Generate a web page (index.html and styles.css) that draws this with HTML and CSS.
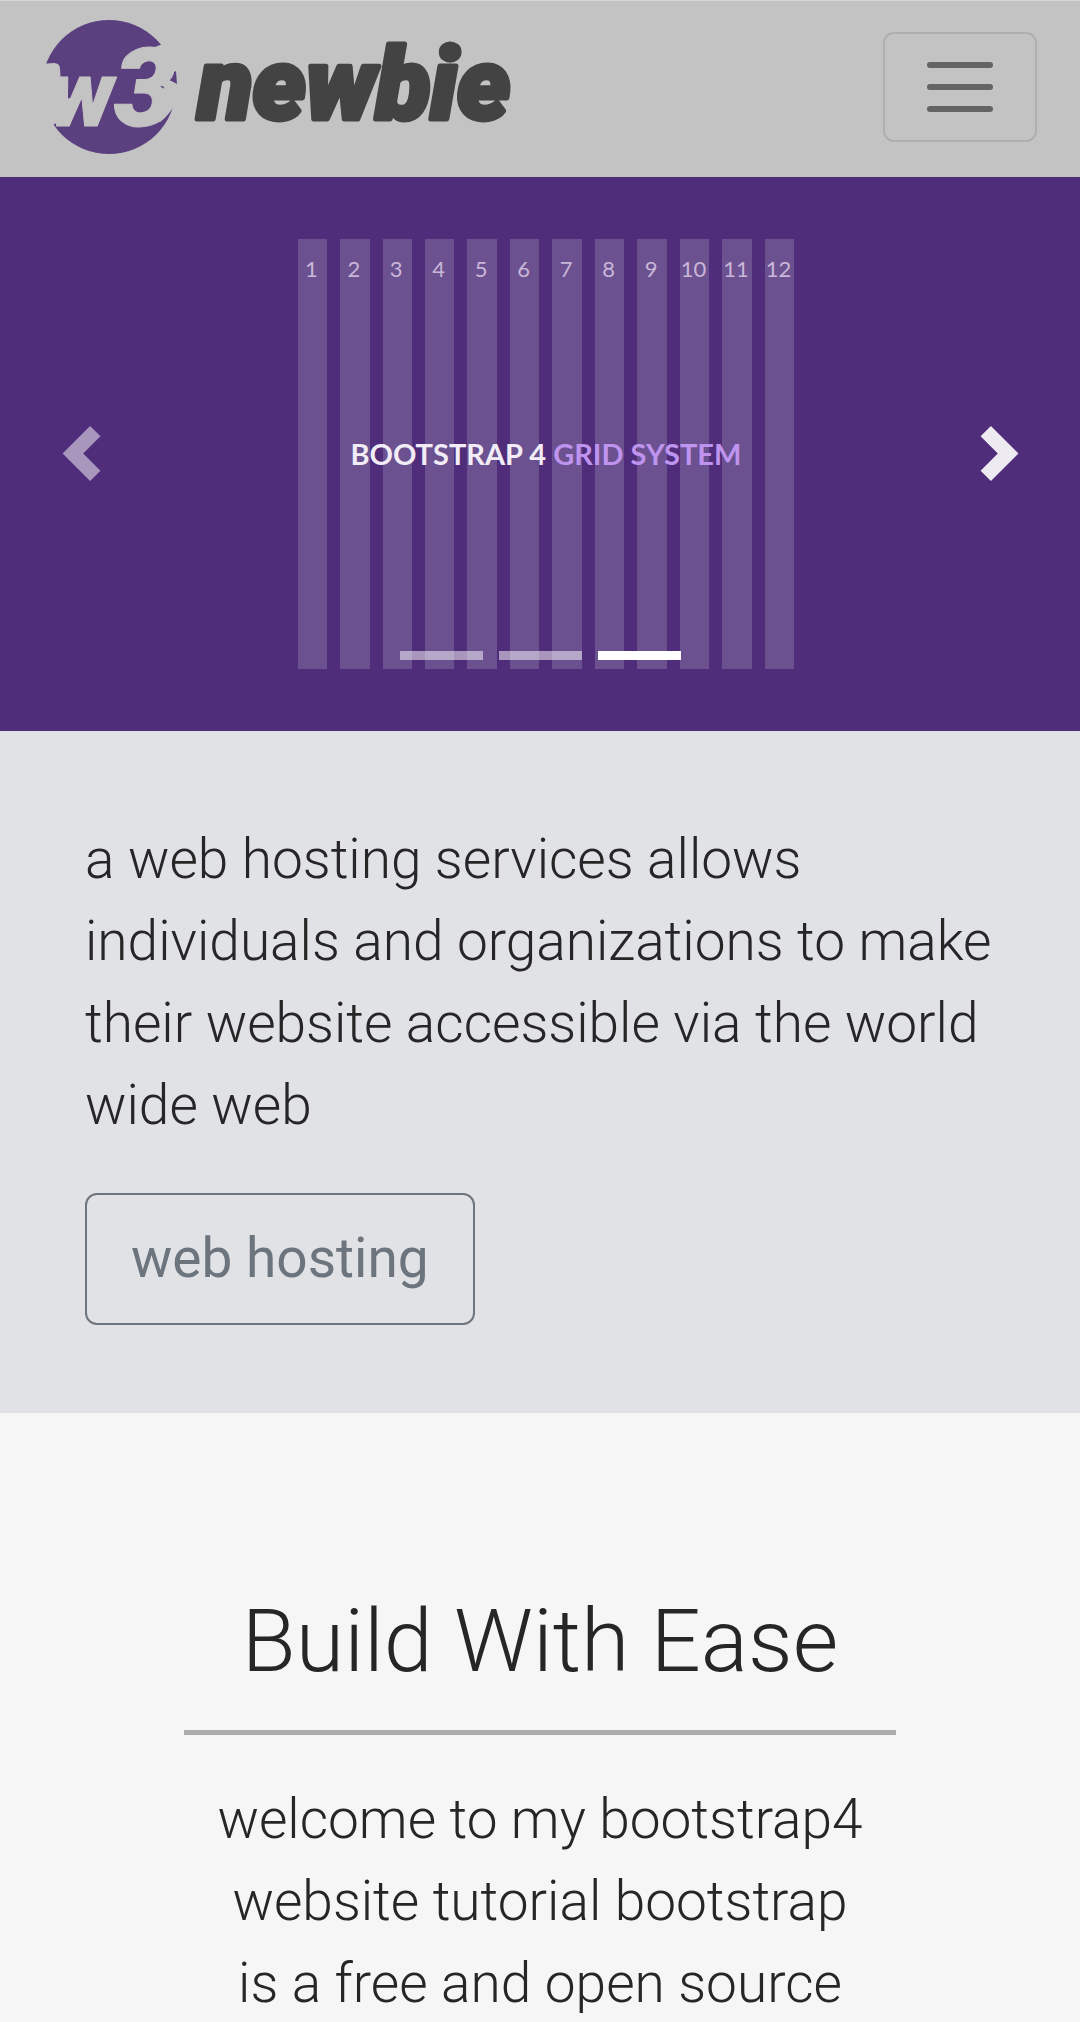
FILE: index.html
```html
<!DOCTYPE html>
<html lang="en">
<head>
<meta charset="utf-8">
<meta name="viewport" content="width=device-width, initial-scale=1">
<title>w3newbie</title>
<link rel="stylesheet" href="styles.css">
</head>
<body>
<header class="navbar">
  <a class="brand" href="#" aria-label="w3newbie home">
    <svg class="brand-logo" width="480" height="136" viewBox="0 0 480 136">
      <circle class="logo-disc" cx="65" cy="68" r="67"/>
      <path class="logo-cut" d="M-5 45L10 44Q16 44 16 50L18 81L30 78Q24 98 9 106L-5 110ZM119 25L140 24V86L130 87Q124 97 116 103L110 92Q120 80 120 68L106 60L120 46Q120 34 108 29Z"/>
      <path class="logo-disc" d="M119 59L132 52L133 65Q126 61 119 59Z"/>
      <text class="logo-mark" x="5" y="107">w<tspan class="logo-three">3</tspan></text>
      <text class="logo-name" x="154" y="100">newbie</text>
    </svg>
  </a>
  <button class="toggler" type="button" aria-label="Toggle navigation">
    <svg width="82" height="82" viewBox="0 0 82 82" fill="none" stroke="#646464" stroke-width="6" stroke-linecap="round"><path d="M11 19H71M11 41H71M11 63H71"/></svg>
  </button>
</header>
<main>
  <section class="carousel" aria-label="Bootstrap slides">
    <div class="slide">
      <div class="slide-cols">
        <div class="slide-col">1</div>
        <div class="slide-col">2</div>
        <div class="slide-col">3</div>
        <div class="slide-col">4</div>
        <div class="slide-col">5</div>
        <div class="slide-col">6</div>
        <div class="slide-col">7</div>
        <div class="slide-col">8</div>
        <div class="slide-col">9</div>
        <div class="slide-col">10</div>
        <div class="slide-col">11</div>
        <div class="slide-col">12</div>
      </div>
      <p class="slide-title">BOOTSTRAP 4 <span class="accent">GRID SYSTEM</span></p>
    </div>
    <button class="control prev" type="button" aria-label="Previous">
      <svg width="55" height="55" viewBox="0 0 8 8" fill="#fff"><path d="M5.25 0l-4 4 4 4 1.5-1.5L4.25 4l2.5-2.5z"/></svg>
    </button>
    <button class="control next" type="button" aria-label="Next">
      <svg width="55" height="55" viewBox="0 0 8 8" fill="#fff"><path d="M2.75 0l-1.5 1.5L3.75 4l-2.5 2.5L2.75 8l4-4z"/></svg>
    </button>
    <div class="indicators">
      <button class="indicator" type="button" aria-label="Slide 1"></button>
      <button class="indicator" type="button" aria-label="Slide 2"></button>
      <button class="indicator active" type="button" aria-label="Slide 3"></button>
    </div>
  </section>
  <section class="jumbotron">
    <p class="lead">a web hosting services allows individuals and organizations to make their website accessible via the world wide web</p>
    <a class="btn" href="#">web hosting</a>
  </section>
  <section class="welcome">
    <h1 class="heading">Build With Ease</h1>
    <hr class="rule">
    <p class="lead intro">welcome to my bootstrap4 website tutorial bootstrap is a free and open source</p>
  </section>
</main>
</body>
</html>
```
FILE: styles.css
```css
* { box-sizing: border-box; }

body {
  margin: 0;
  background: #f6f6f6;
  color: #262626;
  font-family: Roboto, "Liberation Sans", sans-serif;
}

button { margin: 0; padding: 0; border: 0; background: none; cursor: pointer; }
svg { display: block; }

.navbar {
  display: flex;
  align-items: center;
  justify-content: space-between;
  padding: 18px 43px 22px 44px;
  border-top: 1px solid #d6d8d8;
  background: #c4c3c4;
}

.brand-logo { overflow: hidden; }
.logo-disc { fill: #5b407f; }
.logo-cut { fill: #c4c3c4; }
.logo-mark,
.logo-name {
  font-family: Roboto, "Liberation Sans", sans-serif;
  font-style: italic;
  font-weight: 900;
  stroke-linejoin: round;
}
.logo-mark { fill: #c4c3c4; stroke: #c4c3c4; stroke-width: 1px; font-size: 92px; }
.logo-three { font-size: 110px; }
.logo-name { fill: #434343; stroke: #434343; stroke-width: 5px; font-size: 100px; }

.toggler {
  display: grid;
  place-items: center;
  padding: 12px 34px;
  border: 2px solid #adb0b0;
  border-radius: 11px;
}

.carousel {
  position: relative;
  padding: 62px 26% 62px 27%;
  background: #502d7a;
}
.slide {
  display: grid;
  grid-template-columns: minmax(0, 1fr);
  margin: 0 5px 0 6px;
  font-family: Lato, sans-serif;
}
.slide-cols {
  grid-area: 1 / 1;
  display: grid;
  grid-template-columns: repeat(12, minmax(0, 1fr));
  column-gap: 13px;
  height: 430px;
}
.slide-col {
  display: flex;
  justify-content: center;
  padding: 16px 2px 0 0;
  background: #6c5191;
  color: #c9b6d8;
  font-size: 22px;
  line-height: 28px;
}
.slide-title {
  grid-area: 1 / 1;
  place-self: center;
  margin: 0;
  padding-bottom: 2px;
  color: #f1ecf5;
  font-size: 29px;
  font-weight: 700;
  white-space: nowrap;
}
.accent { color: #be94ee; }

.control {
  position: absolute;
  top: 0;
  bottom: 2px;
  width: 15%;
  display: grid;
  place-items: center;
}
.prev { left: 0; opacity: .5; }
.next { right: 0; opacity: .9; }

.indicators {
  position: absolute;
  right: 0;
  bottom: 71px;
  left: 0;
  display: flex;
  justify-content: center;
  gap: 16px;
}
.indicator { width: 83px; height: 9px; background: #fff; opacity: .5; }
.indicator.active { opacity: 1; }

.jumbotron {
  padding: 87px 85px 88px;
  background: #e1e2e6;
}
.lead {
  margin: 0;
  font-size: 55px;
  font-weight: 300;
  line-height: 82px;
}
.btn {
  display: inline-block;
  margin-top: 47px;
  padding: 22px 44px 24px;
  border: 2px solid #6c757d;
  border-radius: 12px;
  color: #6c757d;
  font-size: 55px;
  line-height: 82px;
  text-decoration: none;
  vertical-align: top;
}

.welcome {
  overflow: hidden;
  padding-top: 175px;
  text-align: center;
}
.heading {
  margin: 0;
  font-size: 88px;
  font-weight: 300;
  line-height: 106px;
}
.rule {
  width: 66%;
  height: 5px;
  margin: 36px auto 43px;
  border: 0;
  background: #adadad;
}
.intro { width: 60%; margin: 0 auto -4px; }
```
